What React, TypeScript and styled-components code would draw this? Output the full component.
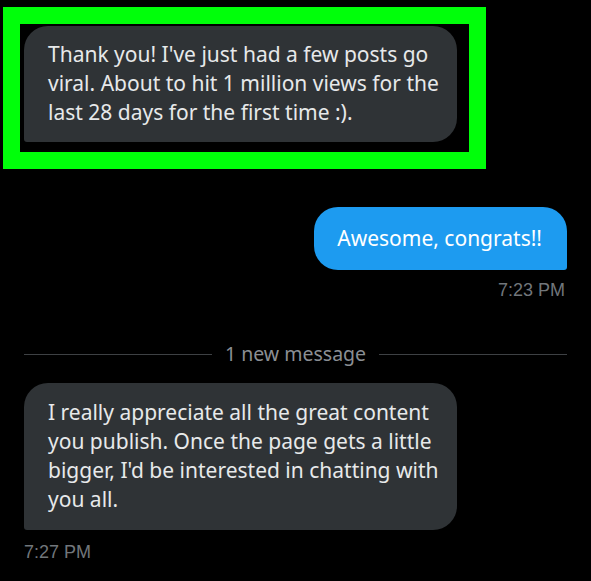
import React from "react";
import styled, { createGlobalStyle } from "styled-components";

const Global = createGlobalStyle`
  html, body { margin: 0; padding: 0; background: #000; }
  body { width: 591px; height: 581px; overflow: hidden; }
`;

const Thread = styled.div`
  display: flex;
  flex-direction: column;
  padding: 7px 24px 0 24px;
  font-family: "Noto Sans", "Open Sans", sans-serif;
  color: #e7e9ea;
`;

const Highlight = styled.div`
  align-self: flex-start;
  margin-left: -21px;
  border: 17px solid #00ff0a;
  padding: 2px 12px 10px 4px;
`;

const Row = styled.div<{ $mine?: boolean; $top?: number }>`
  display: flex;
  flex-direction: column;
  align-items: ${(p) => (p.$mine ? "flex-end" : "flex-start")};
  margin-top: ${(p) => p.$top ?? 0}px;
`;

const Bubble = styled.div<{ $mine?: boolean; $pad?: string }>`
  font-size: 21px;
  line-height: 29px;
  white-space: nowrap;
  padding: ${(p) => p.$pad ?? "14px 24px 15px 24px"};
  border-radius: 24px;
  ${(p) =>
    p.$mine
      ? "border-bottom-right-radius: 3px; background: #1d9bf0; color: #fff;"
      : "border-bottom-left-radius: 3px; background: #2f3336; color: #e7e9ea;"}
  ${(p) => (p.$mine ? "" : "width: 385px;")}
`;

const Time = styled.div<{ $top?: number; $mine?: boolean }>`
  font-family: "Liberation Sans", Arial, sans-serif;
  font-size: 18px;
  line-height: 20px;
  color: #71767b;
  margin-top: ${(p) => p.$top ?? 10}px;
  padding-right: ${(p) => (p.$mine ? 2 : 0)}px;
`;

const Divider = styled.div`
  display: flex;
  align-items: center;
  gap: 13px;
  margin-top: 42px;
  color: #8b8f94;
  font-size: 19.5px;
  line-height: 24px;
  &::before,
  &::after {
    content: "";
    flex: 1;
    height: 1px;
    background: #3e4144;
  }
`;

export default function App() {
  return (
    <>
      <Global />
      <Thread>
        <Highlight>
          <Bubble>
            Thank you! I've just had a few posts go
            <br />
            viral. About to hit 1 million views for the
            <br />
            last 28 days for the first time :).
          </Bubble>
        </Highlight>
        <Row $mine $top={38}>
          <Bubble $mine $pad="17px 25px 17px 23px">
            Awesome, congrats!!
          </Bubble>
          <Time $mine $top={10}>7:23 PM</Time>
        </Row>
        <Divider>1 new message</Divider>
        <Row $top={17}>
          <Bubble $pad="15px 24px 16px 24px">
            I really appreciate all the great content
            <br />
            you publish. Once the page gets a little
            <br />
            bigger, I'd be interested in chatting with
            <br />
            you all.
          </Bubble>
          <Time $top={12}>7:27 PM</Time>
        </Row>
      </Thread>
    </>
  );
}
